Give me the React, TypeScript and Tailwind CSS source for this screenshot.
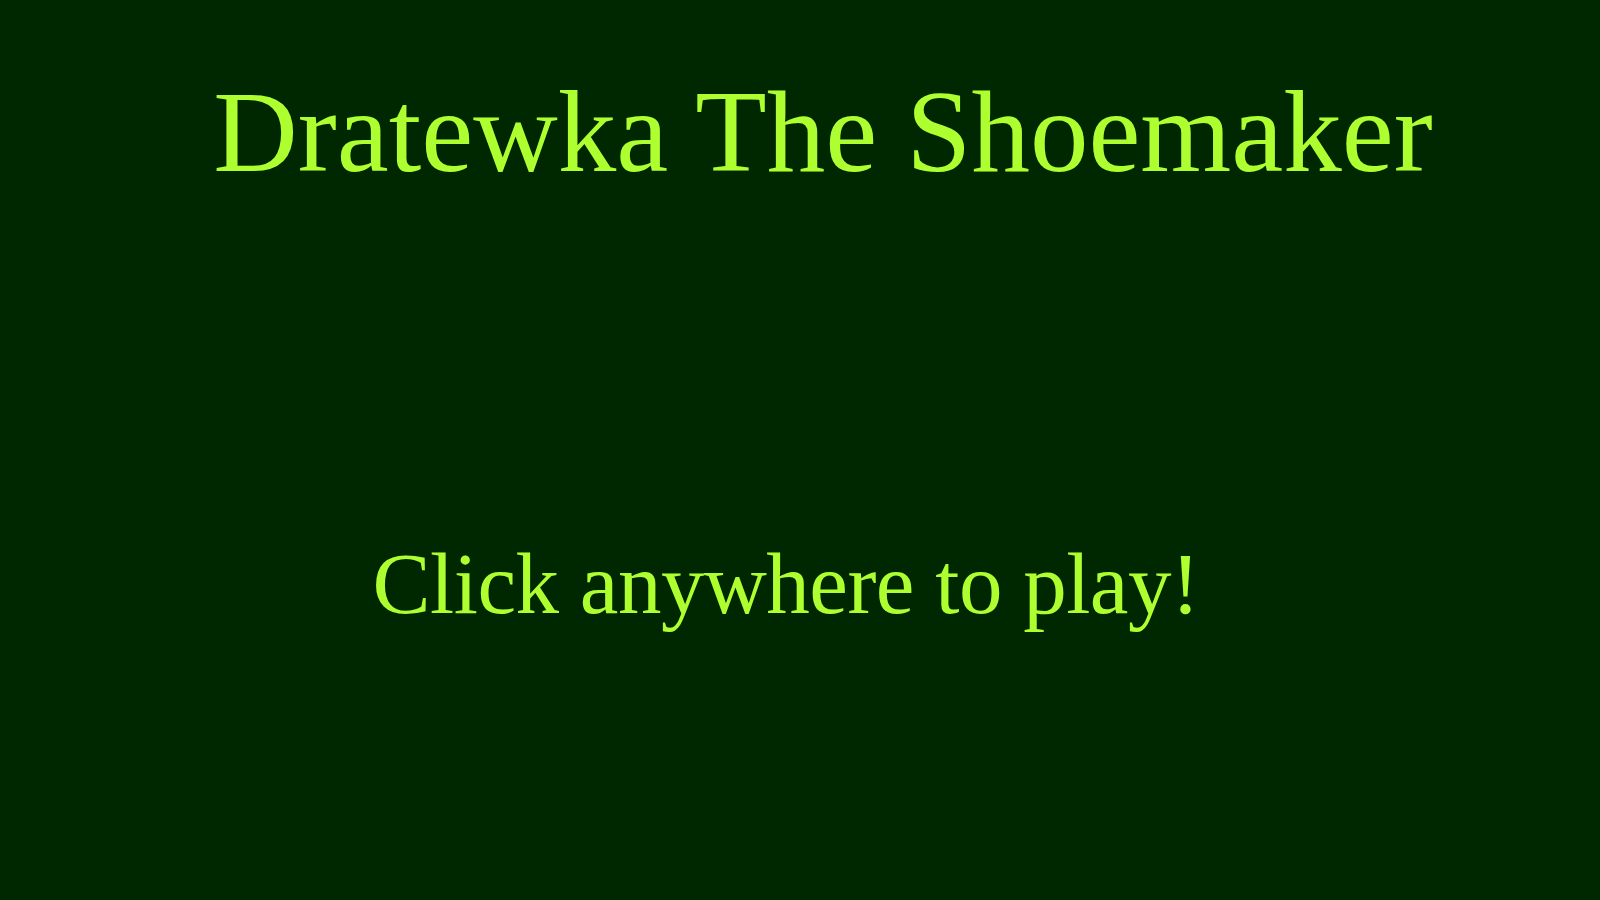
import React from 'react';

export default function App() {
  return (
    <div className="w-full h-[900px] bg-[#002800] flex flex-col items-center overflow-hidden cursor-pointer select-none" style={{ fontFamily: '"Liberation Serif", serif' }}>
      <h1 className="mt-[73px] ml-[46px] text-[117px] leading-none font-normal text-[#adff2f] whitespace-nowrap">
        Dratewka The Shoemaker
      </h1>
      <p className="mt-[350px] mr-[28px] text-[87px] leading-none tracking-[-0.5px] text-[#adff2f] whitespace-nowrap">
        Click anywhere to play!
      </p>
    </div>
  );
}
